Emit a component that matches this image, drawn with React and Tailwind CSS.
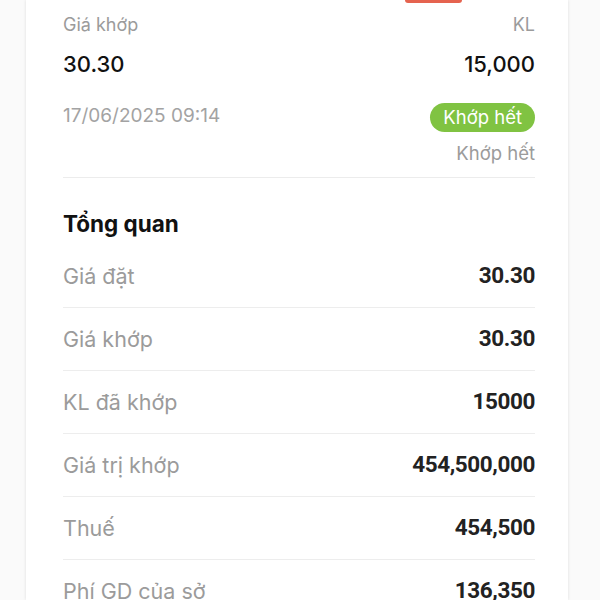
const rows = [
  { label: 'Giá đặt', value: '30.30' },
  { label: 'Giá khớp', value: '30.30' },
  { label: 'KL đã khớp', value: '15000' },
  { label: 'Giá trị khớp', value: '454,500,000' },
  { label: 'Thuế', value: '454,500' },
  { label: 'Phí GD của sở', value: '136,350' },
];

const App = () => {
  return (
    <div className="h-[600px] overflow-hidden bg-[#fafafa] flex font-['Inter','Noto_Sans',sans-serif]">
      <div className="ml-[26px] w-[542px] bg-white shadow-[0_0_3px_rgba(0,0,0,0.12)] pl-[37px] pr-[33px]">
        <div className="flex justify-end">
          <div className="w-[57px] h-[3px] mr-[73px] bg-[#e5634f] rounded-b-[3px]" />
        </div>

        <div className="mt-[10px] flex justify-between text-[18px] leading-6 text-[#9b9b9b]">
          <span>Giá khớp</span>
          <span>KL</span>
        </div>

        <div className="mt-[13px] flex justify-between text-[22px] leading-7 font-medium text-[#111]">
          <span>30.30</span>
          <span>15,000</span>
        </div>

        <div className="mt-[25px] flex items-center justify-between h-[29px]">
          <span className="text-[19px] leading-6 text-[#a3a3a3] -mt-[3px]">17/06/2025 09:14</span>
          <span className="h-[29px] px-[13px] rounded-full bg-[#80c342] text-white text-[18.5px] leading-[29px]">
            Khớp hết
          </span>
        </div>

        <div className="mt-[9px] text-right text-[18.5px] leading-6 text-[#9b9b9b]">Khớp hết</div>

        <div className="mt-[12px] border-b border-[#ececec]" />

        <h2 className="mt-[32px] text-[22.5px] leading-7 font-bold text-[#111]">Tổng quan</h2>

        <div className="mt-[7px]">
          {rows.map((row) => (
            <div
              key={row.label}
              className="h-[63px] flex items-center justify-between border-b border-[#ededed]"
            >
              <span className="text-[21.5px] text-[#9b9b9b]">{row.label}</span>
              <span className="text-[22.5px] font-bold text-[#222] font-['Roboto',sans-serif] tracking-[-0.4px]">
                {row.value}
              </span>
            </div>
          ))}
        </div>
      </div>
    </div>
  );
};

export default App;
